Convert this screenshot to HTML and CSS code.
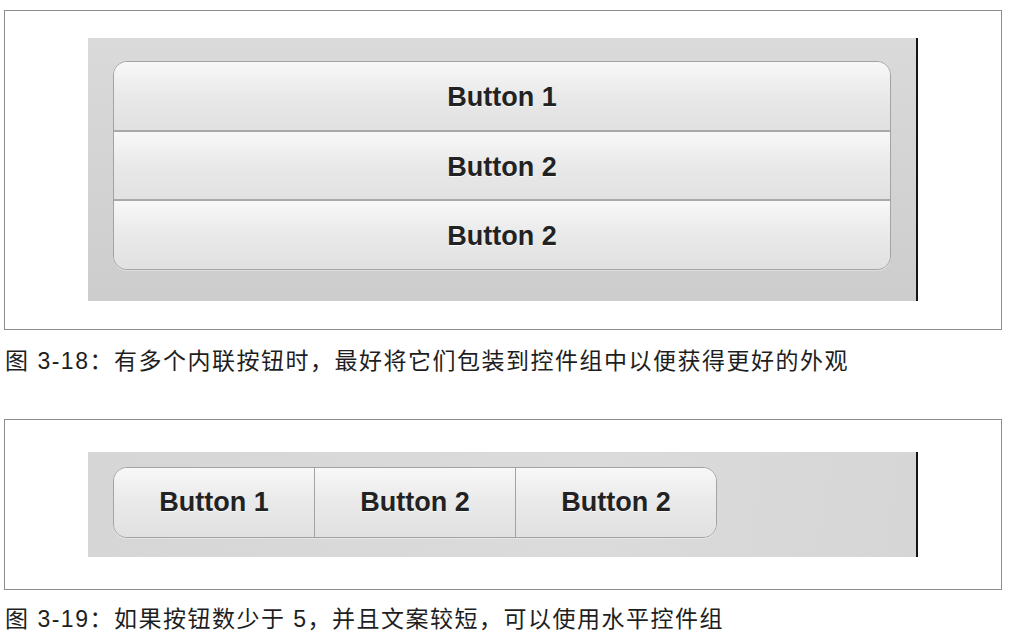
FILE: index.html
```html
<!DOCTYPE html>
<html lang="zh">
<head>
<meta charset="utf-8">
<link rel="stylesheet" href="styles.css">
</head>
<body>
<div class="page">
  <div class="frame frame-v">
    <div class="panel panel-v">
      <div class="group group-v">
        <div class="btn">Button 1</div>
        <div class="btn">Button 2</div>
        <div class="btn">Button 2</div>
      </div>
    </div>
  </div>
  <p class="caption caption-1">图 3-18：有多个内联按钮时，最好将它们包装到控件组中以便获得更好的外观</p>
  <div class="frame frame-h">
    <div class="panel panel-h">
      <div class="group group-h">
        <div class="btn">Button 1</div>
        <div class="btn">Button 2</div>
        <div class="btn">Button 2</div>
      </div>
    </div>
  </div>
  <p class="caption caption-2">图 3-19：如果按钮数少于 5，并且文案较短，可以使用水平控件组</p>
</div>
</body>
</html>
```

FILE: styles.css
```css
* { box-sizing: border-box; }
html, body { margin: 0; padding: 0; background: #fff; }
.page {
  display: flex;
  flex-direction: column;
  padding: 10px 0 0 4px;
  width: 1010px;
  height: 641px;
  overflow: hidden;
}
.frame {
  width: 998px;
  border: 1px solid #8c8c8c;
  padding-left: 83px;
}
.frame-v { height: 320px; padding-top: 27px; }
.frame-h { height: 171px; padding-top: 32px; }
.panel {
  width: 830px;
  border-right: 2px solid #151515;
  padding-left: 25px;
}
.panel-v {
  height: 263px;
  padding-top: 23px;
  background: linear-gradient(#dadada, #cdcdcd);
}
.panel-h {
  height: 105px;
  padding-top: 15px;
  background: linear-gradient(100deg, #d6d6d6, #dbdbdb 60%, #d6d6d6);
}
.group {
  display: flex;
  border: 1px solid #a3a3a3;
  border-radius: 14px;
  overflow: hidden;
  box-shadow: 0 1px 0 rgba(255,255,255,0.35);
}
.group-v { flex-direction: column; width: 778px; height: 209px; }
.group-h { flex-direction: row; width: 604px; height: 71px; }
.btn {
  flex: 1;
  display: flex;
  align-items: center;
  justify-content: center;
  background: linear-gradient(#f8f8f8, #e9e9e9 50%, #e1e1e1);
  font-family: "Liberation Sans", Arial, sans-serif;
  font-weight: bold;
  font-size: 27px;
  color: #222;
  text-shadow: 0 1px 0 rgba(255,255,255,0.8);
}
.group-v .btn { padding-top: 3px; }
.group-v .btn + .btn { border-top: 2px solid #a9a9a9; }
.group-h .btn + .btn { border-left: 1px solid #a3a3a3; }
.caption {
  margin: 0;
  font-family: "Liberation Sans", "Noto Sans CJK SC", sans-serif;
  font-size: 23px;
  letter-spacing: 1.5px;
  color: #1e1e1e;
  line-height: 30px;
  padding-left: 1px;
}
.caption-1 { margin-top: 16px; margin-bottom: 43px; }
.caption-2 { margin-top: 14px; }
```
